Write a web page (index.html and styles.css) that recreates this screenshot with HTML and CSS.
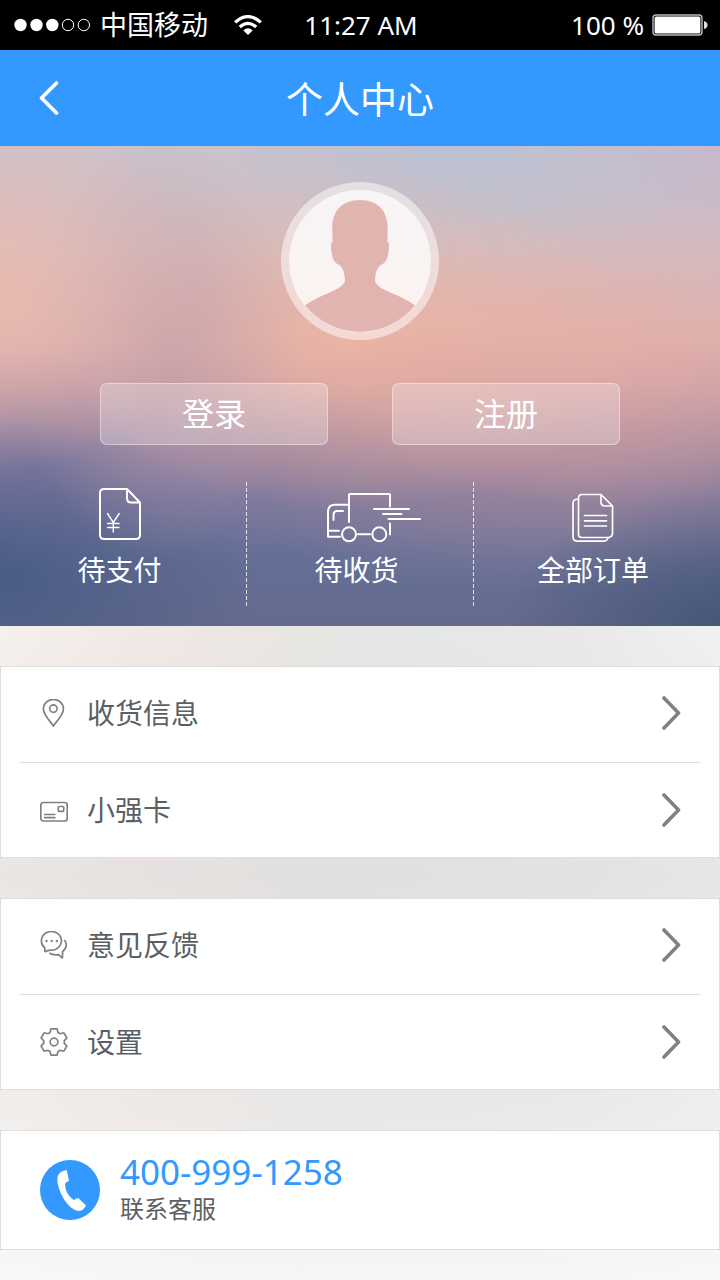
FILE: index.html
```html
<!DOCTYPE html>
<html lang="zh-CN">
<head>
<meta charset="utf-8">
<meta name="viewport" content="width=device-width, initial-scale=1">
<title>个人中心</title>
<link rel="stylesheet" href="styles.css">
</head>
<body>
<div class="status">
  <div class="status-left">
    <svg class="signal" viewBox="0 0 76 14" aria-hidden="true">
      <g fill="#fff"><circle cx="6.5" cy="7" r="6.2"/><circle cx="22.5" cy="7" r="6.2"/><circle cx="38.3" cy="7" r="6.2"/></g>
      <g fill="none" stroke="#fff"><circle cx="54" cy="7" r="5.7"/><circle cx="69.8" cy="7" r="5.7"/></g>
    </svg>
    <span class="carrier">中国移动</span>
    <svg class="wifi" viewBox="0 0 28 20" aria-hidden="true">
      <g fill="none" stroke="#fff" stroke-width="3.2"><path d="M1.2 7.4Q14-4.2 26.8 7.4"/><path d="M5.8 12Q14 4.6 22.2 12"/></g>
      <path d="M9.4 15.6Q14 11 18.6 15.6L14 20Z" fill="#fff"/>
    </svg>
  </div>
  <span>11:27 AM</span>
  <div class="status-right">
    <span>100 %</span>
    <svg class="battery" viewBox="0 0 56 22" aria-hidden="true">
      <rect x="1" y="1" width="49" height="20" rx="3" fill="none" stroke="#bbb" stroke-width="1.4"/>
      <rect x="2.6" y="2.6" width="45.8" height="16.8" rx="1.5" fill="#fff"/>
      <path d="M52 7Q55.6 8 55.6 11T52 15Z" fill="#ddd"/>
    </svg>
  </div>
</div>

<header class="header">
  <button class="back" type="button" aria-label="返回">
    <svg viewBox="0 0 22 34" aria-hidden="true"><path d="M18.500 2 3.500 17l15 15" fill="none" stroke="#fff" stroke-width="3.6" stroke-linecap="round" stroke-linejoin="round"/></svg>
  </button>
  <h1 class="title">个人中心</h1>
</header>

<main>
  <section class="hero">
    <svg class="avatar" viewBox="0 0 158 158" role="img" aria-label="头像">
      <circle cx="79" cy="79" r="79" fill="#fff" fill-opacity=".5"/>
      <circle cx="79" cy="79" r="71" fill="#fff" fill-opacity=".68"/>
      <path d="M79 18C60 18 51.3 30 51.3 46C51.2 52 51.6 56 51.7 60L50 60.7C50 70 51 78 55.5 81.5C61 84 63.500 88 64 98.500C63 104 55 108 44 112.500Q31 118 24 123.600A71 71 0 0 0 134 123.600Q127 118 114 112.500C103 108 95 104 94 98.500C94.500 88 97 84 102.500 81.500C107 78 108 70 108 60.700L106.300 60C106.400 56 106.800 52 106.700 46C106.700 30 98 18 79 18Z" fill="#e1b4af"/>
    </svg>
    <div class="actions">
      <button class="action" type="button">登录</button>
      <button class="action" type="button">注册</button>
    </div>
    <nav class="orders">
      <a class="order" href="#pay">
        <svg class="order-icon" viewBox="0 0 42 56" aria-hidden="true">
          <path d="M28 3H5Q1 3 1 7V49Q1 53 5 53H37Q41 53 41 49V16.500L28 3V12Q28 16.500 32 16.500H41"/>
          <path stroke-width="1.400" d="M8.500 27.500 14.300 36.500 20.200 27.500M14.300 36.500V46M8.700 37.500H20M8.700 41.500H20"/>
        </svg>
        <span>待支付</span>
      </a>
      <a class="order" href="#receive">
        <svg class="order-icon order-icon-truck" viewBox="0 0 60 56" aria-hidden="true">
          <path d="M22 36V9Q22 8 23 8H62Q63 8 63 9V20.500M63 37.500V48.500M22 18.700H8Q1 18.700 1 26V50.700H13M1 44.700H12M6.500 34V29Q6.500 25 10.500 25H16M31 48.300H43M47 23H82M56 28H74.500M61.500 33H93"/>
          <circle cx="22" cy="48.300" r="7"/><circle cx="52.300" cy="48.300" r="7"/>
        </svg>
        <span>待收货</span>
      </a>
      <a class="order" href="#all">
        <svg class="order-icon" viewBox="0 0 42 56" aria-hidden="true">
          <path stroke-width="1.700" d="M29 8.500H10Q6.500 8.500 6.500 12V48Q6.500 51.500 10 51.500H36.500Q40.500 51 40.500 47V20L29 8.500V16Q29 20 33 20H40.500M6 13Q1 13 1 18V50.500Q1 55.200 5.500 55.200H31Q35 55.200 36 52M12.500 29.500H34.500M12.500 34.800H34.500M12.500 40H34.500"/>
        </svg>
        <span>全部订单</span>
      </a>
    </nav>
  </section>

  <div class="groups">
    <nav class="group">
      <a class="row" href="#address">
        <svg class="row-icon" viewBox="0 0 28 28" aria-hidden="true"><path d="M13.400 27C11 23 3.400 16 3.400 9.900A10 9.500 0 0 1 23.400 9.900C23.400 16 15.800 23 13.400 27Z"/><circle cx="13.400" cy="9.600" r="3.700"/></svg>
        <span class="row-label">收货信息</span>
        <svg class="chevron" viewBox="0 0 20 34" aria-hidden="true"><path d="M3 2 17.500 17 3 32"/></svg>
      </a>
      <a class="row" href="#card">
        <svg class="row-icon" viewBox="0 0 28 28" aria-hidden="true"><rect x=".8" y="6.500" width="26.400" height="18.500" rx="2.500"/><rect x="18.300" y="10.500" width="5.400" height="4.800" rx=".8"/><path d="M4 18.500H15.500M4 21.700H15.500"/></svg>
        <span class="row-label">小强卡</span>
        <svg class="chevron" viewBox="0 0 20 34" aria-hidden="true"><path d="M3 2 17.500 17 3 32"/></svg>
      </a>
    </nav>
    <nav class="group">
      <a class="row" href="#feedback">
        <svg class="row-icon" viewBox="0 0 28 28" aria-hidden="true"><path d="M4.800 21V16.900A10 9.400 0 1 1 10.500 19.200Q7.500 19.200 4.800 21M24.200 9C27.200 12 27.200 17 22.600 20.500L22.400 27 18.500 23.700C14.500 24.300 11.500 23.800 9.300 22"/><g fill="#808080" stroke="none"><circle cx="6.500" cy="10" r="1.200"/><circle cx="11.700" cy="10" r="1.200"/><circle cx="16.900" cy="10" r="1.200"/></g></svg>
        <span class="row-label">意见反馈</span>
        <svg class="chevron" viewBox="0 0 20 34" aria-hidden="true"><path d="M3 2 17.500 17 3 32"/></svg>
      </a>
      <a class="row" href="#settings">
        <svg class="row-icon" viewBox="-14 -14 28 28" aria-hidden="true"><path d="M-3-13.200H3L4-9.600 6.300-8.300 9.900-9.200 12.900-4 10.300-1.300V1.300L12.900 4 9.900 9.200 6.300 8.300 4 9.600 3 13.200H-3L-4 9.600-6.300 8.300-9.900 9.200-12.900 4-10.300 1.300V-1.300L-12.900-4-9.900-9.200-6.300-8.300-4-9.600Z"/><circle r="3.900"/></svg>
        <span class="row-label">设置</span>
        <svg class="chevron" viewBox="0 0 20 34" aria-hidden="true"><path d="M3 2 17.500 17 3 32"/></svg>
      </a>
    </nav>
    <a class="group contact" href="tel:400-999-1258">
      <svg class="contact-icon" viewBox="0 0 60 60" aria-hidden="true"><circle cx="30" cy="30" r="30" fill="#39f"/><path d="M26.700 10 29 21Q25 22 25 25Q26 35 34 40.300Q35.500 38 38.500 38.300L46 45.500Q43 51 38.500 51Q30 49.500 23.500 38.500Q17 27 17.300 18Q18 11.500 26.700 10Z" fill="#fff"/></svg>
      <span class="contact-text">
        <span class="contact-number">400-999-1258</span>
        <span class="contact-label">联系客服</span>
      </span>
    </a>
  </div>
</main>
</body>
</html>
```
FILE: styles.css
```css
* {
  box-sizing: border-box;
}

body {
  margin: 0;
  min-height: 100vh;
  display: flex;
  flex-direction: column;
  font-family: "Noto Sans", "Noto Sans CJK SC", sans-serif;
  color: #5b5f63;
}

a {
  color: inherit;
  text-decoration: none;
}

button {
  font: inherit;
  color: inherit;
  cursor: pointer;
}

svg {
  display: block;
  flex: none;
}

.status {
  display: grid;
  grid-template-columns: 1fr auto 1fr;
  align-items: center;
  height: 50px;
  padding: 0 12px 0 14px;
  background: #000;
  color: #fff;
  font-size: 26px;
  line-height: 50px;
}

.status-left,
.status-right {
  display: flex;
  align-items: center;
}

.status-right {
  justify-content: flex-end;
  gap: 8px;
}

.signal {
  width: 76px;
  height: 14px;
}

.carrier {
  margin: 0 26px 0 10px;
  font-size: 27px;
}

.wifi {
  width: 28px;
  height: 20px;
}

.battery {
  width: 56px;
  height: 22px;
}

.header {
  display: grid;
  grid-template-columns: 100px 1fr 100px;
  align-items: center;
  height: 96px;
  background: #39f;
  color: #fff;
}

.back {
  display: flex;
  align-items: center;
  height: 96px;
  padding: 0 0 0 38px;
  border: 0;
  background: none;
}

.back svg {
  width: 22px;
  height: 34px;
}

.title {
  margin: 0;
  padding-top: 4px;
  font-size: 37px;
  font-weight: 400;
  line-height: 48px;
  text-align: center;
}

main {
  flex: 1;
  display: flex;
  flex-direction: column;
}

.hero {
  display: flex;
  flex-direction: column;
  align-items: center;
  padding: 36px 0 20px;
  color: #fff;
  background:
    radial-gradient(ellipse 28% 38% at 0% 30%, rgba(238, 186, 174, .8), rgba(238, 186, 174, 0)),
    radial-gradient(ellipse 20% 44% at 22% 42%, rgba(192, 158, 170, .65), rgba(192, 158, 170, 0)),
    radial-gradient(ellipse 40% 36% at 48% 40%, rgba(238, 180, 162, .8), rgba(238, 180, 162, 0)),
    radial-gradient(ellipse 42% 32% at 84% 43%, rgba(232, 176, 168, .75), rgba(232, 176, 168, 0)),
    radial-gradient(ellipse 36% 32% at 64% 0%, rgba(180, 192, 214, .7), rgba(180, 192, 214, 0)),
    radial-gradient(ellipse 30% 36% at 100% 0%, rgba(198, 182, 202, .8), rgba(198, 182, 202, 0)),
    radial-gradient(ellipse 36% 34% at 0% 90%, rgba(64, 86, 130, .75), rgba(64, 86, 130, 0)),
    radial-gradient(ellipse 30% 28% at 100% 100%, rgba(60, 80, 112, .75), rgba(60, 80, 112, 0)),
    radial-gradient(ellipse 50% 24% at 8% 66%, rgba(124, 120, 164, .6), rgba(124, 120, 164, 0)),
    radial-gradient(ellipse 50% 28% at 76% 65%, rgba(176, 140, 158, .7), rgba(176, 140, 158, 0)),
    linear-gradient(#cbc2cb 0%, #d2bfc2 22%, #d8b1b0 40%, #cba0a6 50%, #a58a9f 61%, #7c789b 73%, #646f96 86%, #656a8c 100%);
}

.avatar {
  width: 158px;
  height: 158px;
}

.actions {
  display: grid;
  grid-template-columns: 1fr 1fr;
  gap: 64px;
  align-self: stretch;
  margin: 43px 100px 37px;
}

.action {
  height: 62px;
  padding: 0;
  border: 1px solid rgba(255, 255, 255, .4);
  border-radius: 7px;
  background: rgba(255, 255, 255, .25);
  font-size: 32px;
  line-height: 60px;
}

.orders {
  display: grid;
  grid-template-columns: 247fr 227fr 246fr;
  align-self: stretch;
}

.order {
  display: flex;
  flex-direction: column;
  align-items: center;
  gap: 8px;
  height: 124px;
  padding: 4px 8px 0 0;
  font-size: 28px;
  line-height: 40px;
}

.order:not(:last-child) {
  background: repeating-linear-gradient(rgba(255, 255, 255, .8) 0 4px, transparent 4px 6px) right / 1px 100% no-repeat;
}

.order-icon {
  width: 42px;
  height: 56px;
  overflow: visible;
  fill: none;
  stroke: #fff;
  stroke-width: 2;
  stroke-linecap: round;
  stroke-linejoin: round;
}

.order-icon-truck {
  width: 60px;
}

.groups {
  flex: 1;
  display: flex;
  flex-direction: column;
  gap: 40px;
  padding: 40px 0 30px;
  background:
    linear-gradient(rgba(216, 216, 217, 0) 0%, rgba(216, 216, 217, .42) 38%, rgba(235, 235, 235, .4) 75%, rgba(250, 250, 250, .8) 100%),
    linear-gradient(90deg, #f5f1ed 0%, #f2e9e6 18%, #e8e6e3 42%, #e6e7e7 58%, #eae9ea 80%, #f2f1f1 100%);
}

.group {
  border: 1px solid #dedede;
  background: #fff;
}

.row {
  display: flex;
  align-items: center;
  height: 95px;
  margin: 0 19px;
  padding: 0 19px 0 20px;
}

.row:first-child {
  padding-bottom: 3px;
}

.row + .row {
  border-top: 1px solid #dedede;
}

.row-icon {
  width: 28px;
  height: 28px;
  fill: none;
  stroke: #808080;
  stroke-width: 1.7;
  stroke-linejoin: round;
}

.row-label {
  flex: 1;
  margin-left: 19px;
  font-size: 28px;
  line-height: 40px;
}

.chevron {
  width: 20px;
  height: 34px;
  fill: none;
  stroke: #808080;
  stroke-width: 3.6;
  stroke-linecap: round;
  stroke-linejoin: round;
}

.contact {
  display: flex;
  align-items: center;
  gap: 20px;
  height: 120px;
  padding: 0 39px;
}

.contact-icon {
  width: 60px;
  height: 60px;
}

.contact-text {
  display: flex;
  flex-direction: column;
  padding-bottom: 8px;
}

.contact-number {
  color: #39f;
  font-size: 35px;
  line-height: 48px;
}

.contact-label {
  font-family: "Liberation Sans", "Noto Sans CJK SC", sans-serif;
  font-size: 24px;
  line-height: 28px;
}
```
